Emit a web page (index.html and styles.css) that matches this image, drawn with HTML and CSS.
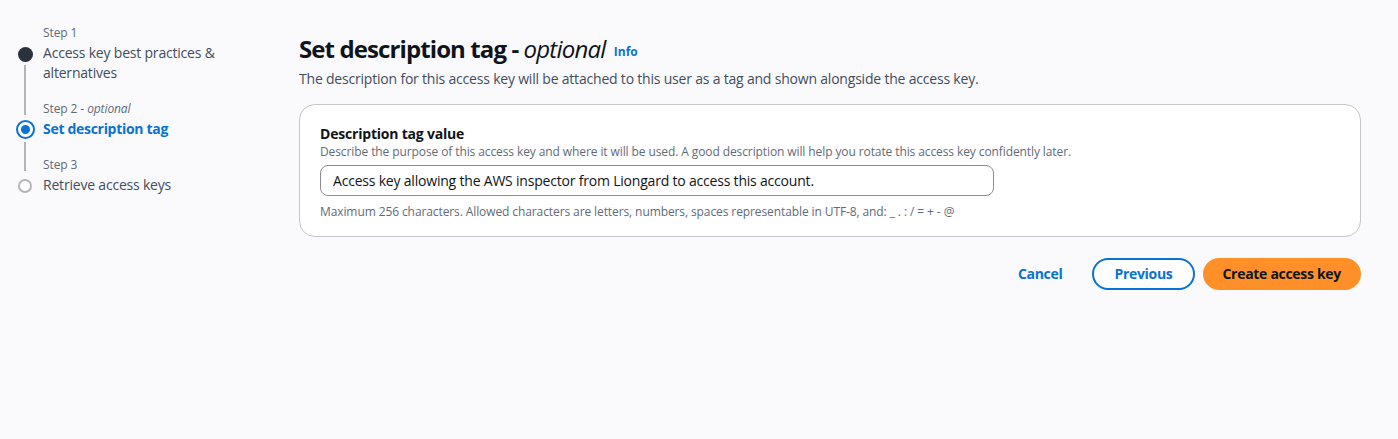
FILE: index.html
```html
<!DOCTYPE html>
<html lang="en">
<head>
<meta charset="utf-8">
<title>Create access key</title>
<link rel="stylesheet" href="styles.css">
</head>
<body>
<div class="page">
  <nav class="steps">
    <div class="step-label r1">Step 1</div>
    <div class="ind ind1"><span class="dot done"></span><span class="line"></span></div>
    <div class="step-title r2">Access key best practices &amp; alternatives</div>
    <div class="step-label r4">Step 2 - <i>optional</i></div>
    <div class="ind ind2"><span class="dot active"></span><span class="line"></span></div>
    <div class="step-title active-title r5">Set description tag</div>
    <div class="step-label r7">Step 3</div>
    <div class="ind ind3"><span class="dot todo"></span></div>
    <div class="step-title r8">Retrieve access keys</div>
  </nav>
  <main class="main">
    <header class="head">
      <h1 class="title">Set description tag - <i>optional</i> <a class="info" href="#">Info</a></h1>
      <p class="subtitle">The description for this access key will be attached to this user as a tag and shown alongside the access key.</p>
    </header>
    <section class="card">
      <label class="field-label" for="desc">Description tag value</label>
      <div class="field-desc">Describe the purpose of this access key and where it will be used. A good description will help you rotate this access key confidently later.</div>
      <input class="input" id="desc" type="text" value="Access key allowing the AWS inspector from Liongard to access this account.">
      <div class="field-constraint">Maximum 256 characters. Allowed characters are letters, numbers, spaces representable in UTF-8, and: _ . : / = + - @</div>
    </section>
    <div class="actions">
      <button class="btn link">Cancel</button>
      <button class="btn normal">Previous</button>
      <button class="btn primary">Create access key</button>
    </div>
  </main>
</div>
</body>
</html>
```
FILE: styles.css
```css
* { box-sizing: border-box; }
html, body { margin: 0; padding: 0; }
body {
  background: #fafafc;
  font-family: "Open Sans", "Noto Sans", sans-serif;
  color: #0f141a;
  width: 1398px;
  height: 439px;
  overflow: hidden;
}
.page {
  display: flex;
  padding: 25px 37px 0 16px;
}
.steps {
  width: 283px;
  flex: none;
  display: grid;
  grid-template-columns: 18px 1fr;
  grid-template-rows: 16px auto 18px 16px auto 18px 16px auto;
  column-gap: 9px;
  align-content: start;
}
.step-label {
  grid-column: 2;
  font-size: 12px;
  line-height: 16px;
  color: #5f6b7a;
  letter-spacing: -0.1px;
}
.step-label i { font-style: italic; }
.step-title {
  grid-column: 2;
  font-size: 14px;
  line-height: 20px;
  color: #414d5c;
  padding-top: 2px;
  padding-right: 40px;
  letter-spacing: -0.2px;
}
.active-title { color: #0972d3; font-weight: 700; letter-spacing: -0.3px; }
.r1 { grid-row: 1; }
.r2 { grid-row: 2; }
.r4 { grid-row: 4; }
.r5 { grid-row: 5; }
.r7 { grid-row: 7; }
.r8 { grid-row: 8; }
.ind {
  grid-column: 1;
  display: flex;
  flex-direction: column;
  align-items: center;
}
.ind1 { grid-row: 2 / 5; }
.ind2 { grid-row: 5 / 8; }
.ind3 { grid-row: 8; }
.dot {
  flex: none;
  border-radius: 50%;
}
.dot.done { width: 15px; height: 15px; background: #2a323d; margin-top: 6px; }
.dot.active {
  width: 19px; height: 19px; margin-top: 3px;
  border: 2px solid #0972d3;
  background: #fff;
  display: flex; align-items: center; justify-content: center;
}
.dot.active::after {
  content: "";
  width: 9px; height: 9px; border-radius: 50%;
  background: #0972d3;
}
.dot.todo { width: 14px; height: 14px; border: 2px solid #b4b4bb; margin-top: 6px; background: #fff; }
.line {
  flex: 1;
  width: 2px;
  background: #b4b4bb;
  margin: 3px 0 2px;
}
.main { flex: 1; }
.head { margin-top: 9px; }
.title {
  margin: 0;
  font-size: 24px;
  line-height: 30px;
  font-weight: 700;
  letter-spacing: -0.9px;
}
.title i { font-weight: 400; letter-spacing: -0.8px; }
.info {
  margin-left: 3px;
  font-size: 12px;
  font-weight: 700;
  color: #0972d3;
  text-decoration: none;
  letter-spacing: 0;
  vertical-align: 2px;
}
.subtitle {
  margin: 2px 0 0;
  font-size: 14px;
  line-height: 20px;
  color: #414d5c;
  letter-spacing: -0.2px;
}
.card {
  margin-top: 15px;
  background: #fff;
  border: 1px solid #c6c6cd;
  border-radius: 16px;
  padding: 19px 20px 16px;
  display: flex;
  flex-direction: column;
}
.field-label {
  font-size: 14px;
  line-height: 20px;
  font-weight: 700;
  color: #0f141a;
  letter-spacing: -0.2px;
}
.field-desc, .field-constraint {
  font-size: 12px;
  line-height: 16px;
  color: #5f6b7a;
  letter-spacing: -0.1px;
}
.input {
  margin-top: 5px;
  width: 674px;
  height: 31px;
  border: 1px solid #8c8c94;
  border-radius: 8px;
  padding: 0 12px;
  font-family: inherit;
  font-size: 14px;
  letter-spacing: -0.2px;
  color: #0f141a;
  background: #fff;
}
.field-constraint { margin-top: 8px; }
.actions {
  margin-top: 21px;
  display: flex;
  justify-content: flex-end;
  gap: 8px;
}
.btn {
  font-family: inherit;
  font-size: 14px;
  line-height: 20px;
  font-weight: 700;
  border-radius: 20px;
  padding: 4px 20px;
  border: 2px solid transparent;
  background: transparent;
  cursor: pointer;
  letter-spacing: -0.3px;
}
.btn.link { color: #0972d3; }
.btn.normal { color: #0972d3; border-color: #0972d3; background: #fff; }
.btn.primary { background: #ff9029; border-color: #ff9029; color: #0f141a; padding: 4px 18px; }
```
